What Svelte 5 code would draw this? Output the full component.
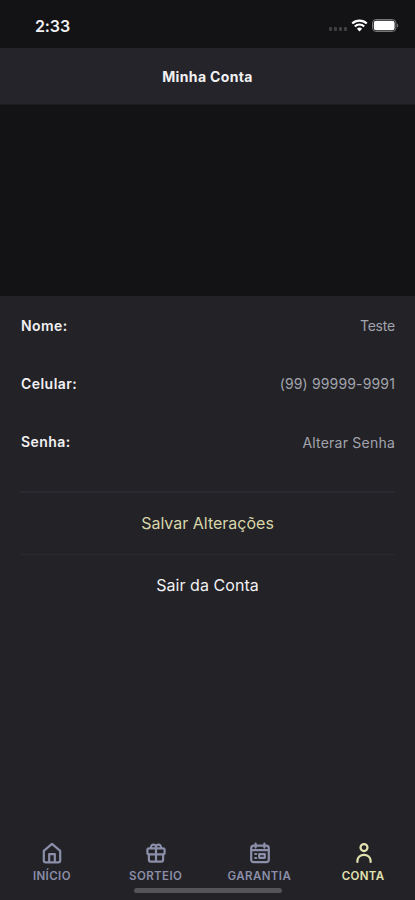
<script lang="ts">
  let name = 'Teste';
  let phone = '(99) 99999-9991';

  const tabs = [
    { id: 'home', label: 'INÍCIO' },
    { id: 'gift', label: 'SORTEIO' },
    { id: 'calendar', label: 'GARANTIA' },
    { id: 'user', label: 'CONTA' }
  ];

  let active = 'user';
</script>

<div class="screen">
  <div class="status">
    <span class="time">2:33</span>
    <div class="indicators">
      <div class="dots"><i></i><i></i><i></i><i></i></div>
      <svg class="wifi" viewBox="0 0 17 13" width="17" height="13">
        <path d="M1.2 4.6a10.4 10.4 0 0 1 14.6 0M3.8 7.5a6.6 6.6 0 0 1 9.4 0" fill="none" stroke="#fff" stroke-width="2.1" />
        <path d="M8.5 12.4 5.9 9.7a3.7 3.7 0 0 1 5.2 0z" fill="#fff" />
      </svg>
      <svg class="battery" viewBox="0 0 27 13" width="27" height="13">
        <rect x="0.5" y="0.5" width="23.4" height="12" rx="3.6" fill="none" stroke="#77777a" />
        <rect x="1.8" y="1.8" width="20.8" height="9.4" rx="2.3" fill="#fff" />
        <path d="M25 4.4c1.6.6 1.6 3.6 0 4.2z" fill="#77777a" />
      </svg>
    </div>
  </div>

  <header>
    <h1>Minha Conta</h1>
  </header>

  <div class="cover"></div>

  <main>
    <div class="row">
      <span class="label">Nome:</span>
      <span class="value name">{name}</span>
    </div>
    <div class="row">
      <span class="label">Celular:</span>
      <span class="value phone">{phone}</span>
    </div>
    <div class="row">
      <span class="label">Senha:</span>
      <span class="value change">Alterar Senha</span>
    </div>

    <div class="actions">
      <button class="save">Salvar Alterações</button>
      <button class="logout">Sair da Conta</button>
    </div>
  </main>

  <nav>
    {#each tabs as tab}
      <button class="tab" class:active={tab.id === active} on:click={() => (active = tab.id)}>
        <svg viewBox="0 0 24 24" width="24" height="24">
          {#if tab.id === 'home'}
            <path d="M3.8 9.8 12 2.8l8.2 7v9.8a1.8 1.8 0 0 1-1.8 1.8H5.6a1.8 1.8 0 0 1-1.8-1.8z" />
            <path d="M9.2 21v-7.8h5.6V21" />
          {:else if tab.id === 'gift'}
            <rect x="3.4" y="7.4" width="17.2" height="6" rx="1.6" />
            <path d="M4.9 13.4v5.4a1.9 1.9 0 0 0 1.9 1.9h10.4a1.9 1.9 0 0 0 1.9-1.9v-5.4M12 7.4v13.3" />
            <path d="M12 7.2V6a2.5 2.5 0 1 0-4.9.8M12 7.2V6a2.5 2.5 0 1 1 4.9.8" />
          {:else if tab.id === 'calendar'}
            <rect x="3.2" y="4.6" width="17.6" height="16.6" rx="2.6" />
            <path d="M7.6 2.6v4M16.4 2.6v4M3.4 9.2h17.2M7.2 13h1M7.2 17h1M11.2 13.2h5.6v3.6h-5.6z" />
          {:else}
            <circle cx="12" cy="6.6" r="3.5" />
            <path d="M5.4 21v-1.2a6.6 6 0 0 1 13.2 0V21" />
          {/if}
        </svg>
        <span>{tab.label}</span>
      </button>
    {/each}
    <div class="home-indicator"></div>
  </nav>
</div>

<style>
  :global(body) {
    background: #232227;
  }

  .screen {
    display: flex;
    flex-direction: column;
    height: 900px;
    overflow: hidden;
    background: #232227;
    color: #f1f1f3;
    font-family: Inter, 'Liberation Sans', sans-serif;
  }

  button {
    padding: 0;
    border: 0;
    background: none;
    color: inherit;
    font-family: inherit;
  }

  .status {
    display: flex;
    justify-content: space-between;
    align-items: center;
    box-sizing: border-box;
    height: 48px;
    padding: 3px 16px 0 35px;
    background: #131315;
  }

  .time {
    font-size: 16px;
    font-weight: 600;
    line-height: 20px;
    letter-spacing: -0.1px;
  }

  .indicators {
    display: flex;
    align-items: center;
  }

  .dots {
    display: flex;
    gap: 2px;
    margin: 7px 4px 0 0;
  }

  .dots i {
    width: 3px;
    height: 4px;
    border-radius: 1px;
    background: #404042;
  }

  .wifi {
    margin-right: 4px;
  }

  header {
    display: flex;
    justify-content: center;
    align-items: center;
    box-sizing: border-box;
    height: 57px;
    padding-top: 2px;
    border-bottom: 1px solid #1b1a1e;
    background: #25242b;
  }

  h1 {
    margin: 0;
    font-size: 14px;
    font-weight: 700;
    line-height: 20px;
    letter-spacing: 0.35px;
  }

  .cover {
    height: 191px;
    background: #131315;
  }

  main {
    flex: 1;
    padding: 0 20px;
  }

  .row {
    display: flex;
    justify-content: space-between;
    align-items: center;
    height: 58px;
    padding-left: 1px;
  }

  .label {
    font-size: 14px;
    font-weight: 600;
    letter-spacing: 0.45px;
  }

  .value {
    color: #a1a4ac;
    font-size: 14px;
  }

  .name {
    letter-spacing: -0.2px;
  }

  .phone {
    letter-spacing: 0.15px;
  }

  .change {
    padding-top: 2px;
    letter-spacing: 0.22px;
  }

  .actions {
    display: flex;
    flex-direction: column;
    margin-top: 21px;
    border-top: 2px solid #2b2a30;
  }

  .actions button {
    height: 62px;
    padding-bottom: 2px;
    font-size: 16px;
  }

  .save {
    border-bottom: 1px solid #2a292f;
    color: #d8d6a9;
  }

  .logout {
    letter-spacing: 0.05px;
  }

  nav {
    position: relative;
    display: flex;
    height: 63px;
  }

  .tab {
    display: flex;
    flex: 1;
    flex-direction: column;
    align-items: center;
    padding-top: 4px;
    color: #8b8fa9;
    font-size: 11.5px;
    font-weight: 600;
    line-height: 14px;
    letter-spacing: 0.4px;
  }

  .tab svg {
    margin: 0 0 4px 1px;
    fill: none;
    stroke: currentColor;
    stroke-width: 2.2;
    stroke-linecap: round;
    stroke-linejoin: round;
  }

  .tab.active {
    color: #e4e2b1;
  }

  .home-indicator {
    position: absolute;
    bottom: 7px;
    left: 134px;
    width: 148px;
    height: 5px;
    border-radius: 3px;
    background: #555457;
  }
</style>
